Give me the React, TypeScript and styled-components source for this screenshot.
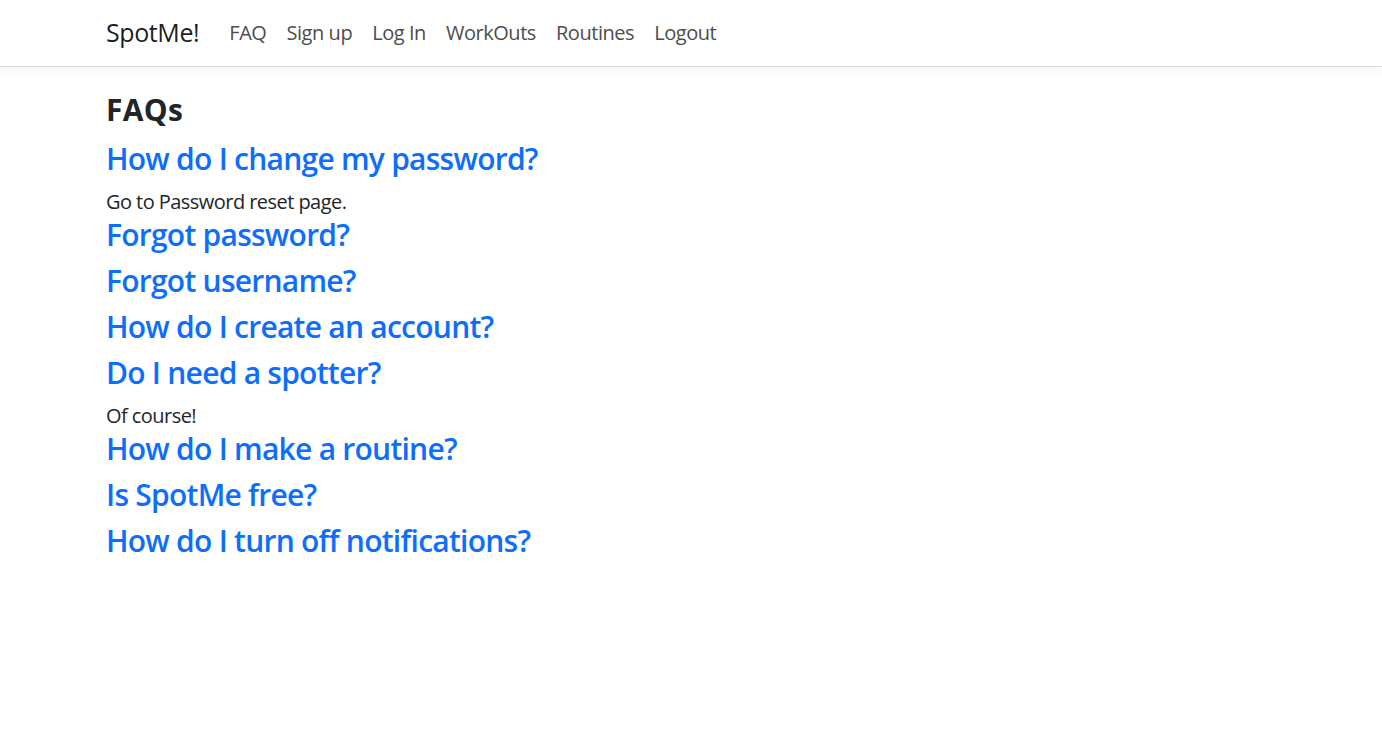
import styled, { createGlobalStyle } from 'styled-components';

const GlobalStyle = createGlobalStyle`
  html, body {
    margin: 0;
    padding: 0;
    background: #fff;
  }
  body {
    font-family: 'Open Sans', 'Noto Sans', sans-serif;
    font-size: 20px;
    line-height: 1.5;
    color: #212529;
  }
  * { box-sizing: border-box; }
`;

const faqs: { q: string; a?: string }[] = [
  { q: 'How do I change my password?', a: 'Go to Password reset page.' },
  { q: 'Forgot password?' },
  { q: 'Forgot username?' },
  { q: 'How do I create an account?' },
  { q: 'Do I need a spotter?', a: 'Of course!' },
  { q: 'How do I make a routine?' },
  { q: 'Is SpotMe free?' },
  { q: 'How do I turn off notifications?' },
];

const links = ['FAQ', 'Sign up', 'Log In', 'WorkOuts', 'Routines', 'Logout'];

export default function App() {
  return (
    <>
      <GlobalStyle />
      <Navbar>
        <Container>
          <Brand href="#">SpotMe!</Brand>
          <NavList>
            {links.map(l => (
              <NavLink key={l} href="#">{l}</NavLink>
            ))}
          </NavList>
        </Container>
      </Navbar>
      <Main>
        <Title>FAQs</Title>
        {faqs.map(f => (
          <Item key={f.q}>
            <Question href="#">{f.q}</Question>
            {f.a && <Answer>{f.a}</Answer>}
          </Item>
        ))}
      </Main>
    </>
  );
}

const Navbar = styled.nav`
  height: 67px;
  border-bottom: 1px solid #dcdcdc;
  box-shadow: 0 3px 10px rgba(0, 0, 0, 0.05);
  display: flex;
  align-items: center;
`;

const Container = styled.div`
  width: 1200px;
  margin: 0 auto;
  padding: 0 15px;
  display: flex;
  align-items: center;
`;

const Brand = styled.a`
  font-size: 25px;
  letter-spacing: -0.4px;
  color: rgba(0, 0, 0, 0.9);
  text-decoration: none;
  margin-right: 20px;
`;

const NavList = styled.div`
  display: flex;
  align-items: center;
`;

const NavLink = styled.a`
  font-size: 20px;
  letter-spacing: -0.45px;
  color: #4d4d4d;
  text-decoration: none;
  padding: 0 10px;
`;

const Main = styled.main`
  width: 1200px;
  margin: 0 auto;
  padding: 25px 15px 0;
`;

const Title = styled.h1`
  font-size: 30px;
  font-weight: 700;
  letter-spacing: 0.3px;
  line-height: 1.2;
  margin: 0 0 13px;
  color: #212529;
`;

const Item = styled.div``;

const Question = styled.a`
  display: block;
  font-size: 30px;
  font-weight: 600;
  letter-spacing: -0.75px;
  line-height: 1.2;
  margin-bottom: 10px;
  color: #0d6efd;
  text-decoration: none;
`;

const Answer = styled.div`
  font-size: 20px;
  letter-spacing: -0.55px;
  line-height: 1.5;
  color: #212529;
`;
